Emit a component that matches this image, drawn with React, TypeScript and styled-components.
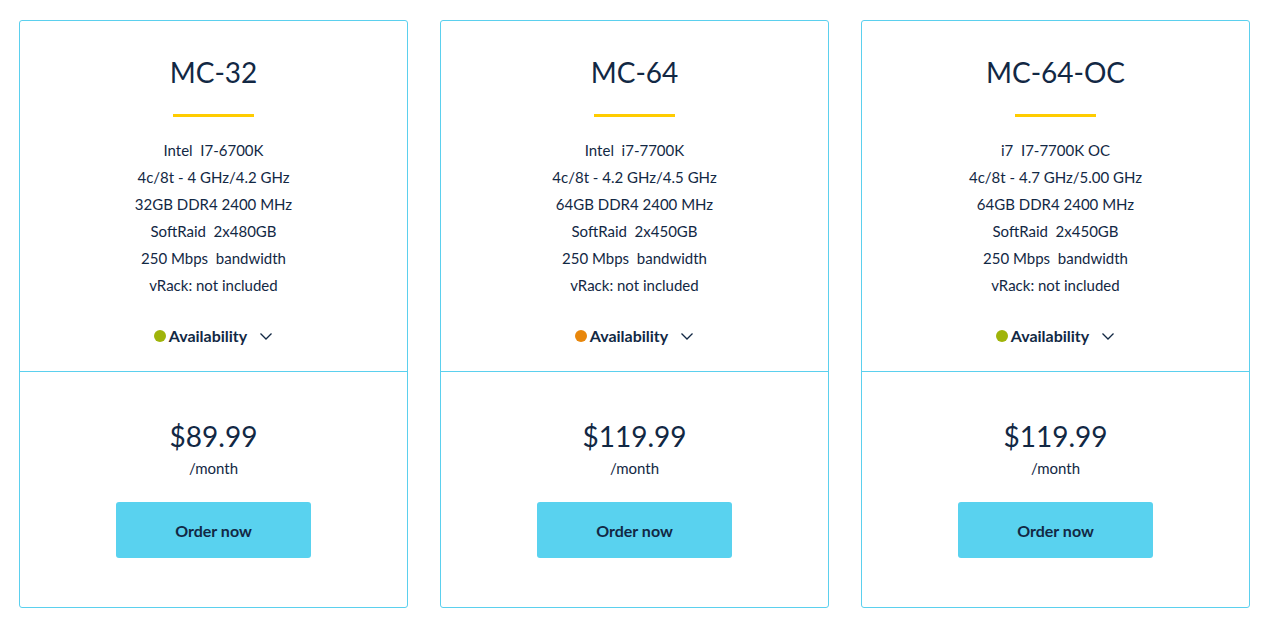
import React, {FC} from 'react';
import styled, {createGlobalStyle} from 'styled-components';

type Plan = {
  name: string;
  specs: string[];
  availability: 'high' | 'low';
  price: string;
};

const plans: Plan[] = [
  {
    name: 'MC-32',
    specs: ['Intel  I7-6700K', '4c/8t - 4 GHz/4.2 GHz', '32GB DDR4 2400 MHz', 'SoftRaid  2x480GB', '250 Mbps  bandwidth', 'vRack: not included'],
    availability: 'high',
    price: '$89.99',
  },
  {
    name: 'MC-64',
    specs: ['Intel  i7-7700K', '4c/8t - 4.2 GHz/4.5 GHz', '64GB DDR4 2400 MHz', 'SoftRaid  2x450GB', '250 Mbps  bandwidth', 'vRack: not included'],
    availability: 'low',
    price: '$119.99',
  },
  {
    name: 'MC-64-OC',
    specs: ['i7  I7-7700K OC', '4c/8t - 4.7 GHz/5.00 GHz', '64GB DDR4 2400 MHz', 'SoftRaid  2x450GB', '250 Mbps  bandwidth', 'vRack: not included'],
    availability: 'high',
    price: '$119.99',
  },
];

const GlobalStyle = createGlobalStyle`
  body {
    margin: 0;
    background: #ffffff;
    font-family: "Source Sans Pro", Lato, "Noto Sans", sans-serif;
    color: #122844;
  }
`;

const PlanCard: FC<{plan: Plan}> = ({plan}) => (
  <Card>
    <Top>
      <Title>{plan.name}</Title>
      <Underline />
      <Specs>
        {plan.specs.map((spec) => (
          <Spec key={spec}>{spec}</Spec>
        ))}
      </Specs>
      <Availability>
        <Dot level={plan.availability} />
        Availability
        <Chevron width="14" height="14" viewBox="0 0 14 14">
          <path d="M1.5 4.5 L7 10 L12.5 4.5" fill="none" stroke="#122844" strokeWidth="1.3" />
        </Chevron>
      </Availability>
    </Top>
    <Bottom>
      <Price>{plan.price}</Price>
      <Period>/month</Period>
      <OrderButton>Order now</OrderButton>
    </Bottom>
  </Card>
);

const App: FC = () => (
  <>
    <GlobalStyle />
    <Page>
      {plans.map((plan) => (
        <PlanCard key={plan.name} plan={plan} />
      ))}
    </Page>
  </>
);

const Page = styled.div`
  display: grid;
  grid-template-columns: repeat(3, 389px);
  gap: 32px;
  padding: 20px 0 19px 19px;
`;

const Card = styled.div`
  display: flex;
  flex-direction: column;
  height: 588px;
  box-sizing: border-box;
  border: 1px solid #5bd0ee;
  border-radius: 3px;
`;

const Top = styled.div`
  display: flex;
  flex-direction: column;
  align-items: center;
  height: 351px;
  border-bottom: 1px solid #5bd0ee;
  padding-top: 31px;
  box-sizing: border-box;
`;

const Title = styled.h2`
  margin: 0;
  font-size: 28px;
  font-weight: 400;
  line-height: 40px;
`;

const Underline = styled.div`
  width: 81px;
  height: 3px;
  background: #ffcc00;
  margin-top: 22px;
`;

const Specs = styled.div`
  display: flex;
  flex-direction: column;
  align-items: center;
  margin-top: 20px;
`;

const Spec = styled.div`
  font-size: 15px;
  line-height: 27px;
  white-space: pre;
`;

const Availability = styled.div`
  display: flex;
  align-items: center;
  margin-top: 25px;
  font-size: 16px;
  font-weight: 700;
  line-height: 24px;
`;

const Dot = styled.span<{level: 'high' | 'low'}>`
  width: 12px;
  height: 12px;
  border-radius: 50%;
  margin-right: 3px;
  background: ${({level}) => (level === 'high' ? '#9fb40a' : '#e8870c')};
`;

const Chevron = styled.svg`
  margin-left: 12px;
`;

const Bottom = styled.div`
  display: flex;
  flex-direction: column;
  align-items: center;
  padding-top: 44px;
`;

const Price = styled.div`
  font-size: 28px;
  line-height: 40px;
`;

const Period = styled.div`
  font-size: 15px;
  line-height: 24px;
`;

const OrderButton = styled.button`
  margin-top: 22px;
  width: 195px;
  height: 56px;
  border: none;
  border-radius: 3px;
  background: #59d2ef;
  color: #122844;
  font-family: inherit;
  font-size: 16px;
  font-weight: 700;
  cursor: pointer;
`;

export default App;
